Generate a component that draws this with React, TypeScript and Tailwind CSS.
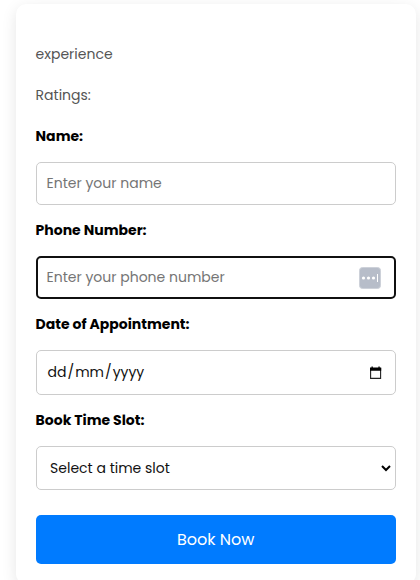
const label = "h-[21px] text-[14px] leading-[21px] font-bold text-black whitespace-nowrap";
const field = "mt-[15px] mb-[15px] flex w-full shrink-0 items-center rounded-[5px] border border-[#ccc] bg-white text-[14px]";

export default function App() {
  return (
    <div className="h-[580px] overflow-hidden bg-white pt-1 pl-[15.6px] font-['Poppins','Inter',sans-serif]">
      <form
        className="flex h-[580px] w-[400px] flex-col rounded-[10px] bg-white px-5 pt-10 shadow-[0_4px_15px_rgba(0,0,0,0.1)]"
        onSubmit={(e) => e.preventDefault()}
      >
        <p className="h-[21px] text-[14px] leading-[21px] text-[#555]"><span>experience</span></p>
        <p className="mt-5 h-[21px] text-[14px] leading-[21px] text-[#555]"><span>Ratings:</span></p>
        <label className={label + " mt-5"}><span>Name:</span></label>
        <div className={field + " h-[43px] px-[10px] text-[#757575]"}>
          <span>Enter your name</span>
        </div>
        <label className={label}><span>Phone Number:</span></label>
        <div className="mt-[15px] mb-[15px] flex h-[43px] w-full shrink-0 items-center justify-between rounded-[5px] border-2 border-[#101010] bg-white pr-[12.6px] pl-[9px] text-[14px] text-[#757575]">
          <span>Enter your phone number</span>
          <svg width="22" height="22" viewBox="0 0 22 22">
            <rect x="0.5" y="0.5" width="21" height="21" rx="3" fill="#b7bdc9" stroke="#cdd1d9" />
            <circle cx="4.5" cy="11" r="1.6" fill="#fff" />
            <circle cx="9.5" cy="11" r="1.6" fill="#fff" />
            <circle cx="14.5" cy="11" r="1.6" fill="#fff" />
            <rect x="18" y="7" width="1" height="8" fill="#fff" />
          </svg>
        </div>
        <label className={label}><span>Date of Appointment:</span></label>
        <div className={field + " h-[45px] justify-between pr-[12.6px] pl-[11px] text-[#111]"}>
          <span className="flex gap-[1px]"><span>dd</span><span>/</span><span>mm</span><span>/</span><span>yyyy</span></span>
          <svg width="13" height="13" viewBox="0 0 13 13">
            <path d="M1.6 2.5h10v9.9h-10z" fill="none" stroke="#222" strokeWidth="1.1" />
            <path d="M1 1.5h11.2v3.2H1zM2.5 0.4h1.3v2H2.5zM9.4 0.4h1.3v2H9.4z" fill="#000" />
          </svg>
        </div>
        <label className={label}><span>Book Time Slot:</span></label>
        <div className={field + " h-[44px] justify-between pr-1 pl-[13.5px] text-[#111]"}>
          <span>Select a time slot</span>
          <svg width="10" height="7" viewBox="0 0 10 7">
            <path d="M1 1l4 4 4-4" fill="none" stroke="#000" strokeWidth="2" />
          </svg>
        </div>
        <button className="mt-[10px] h-[49px] w-full shrink-0 rounded-[5px] bg-[#007bff] text-[16px] text-white">
          <span>Book Now</span>
        </button>
      </form>
    </div>
  );
}
